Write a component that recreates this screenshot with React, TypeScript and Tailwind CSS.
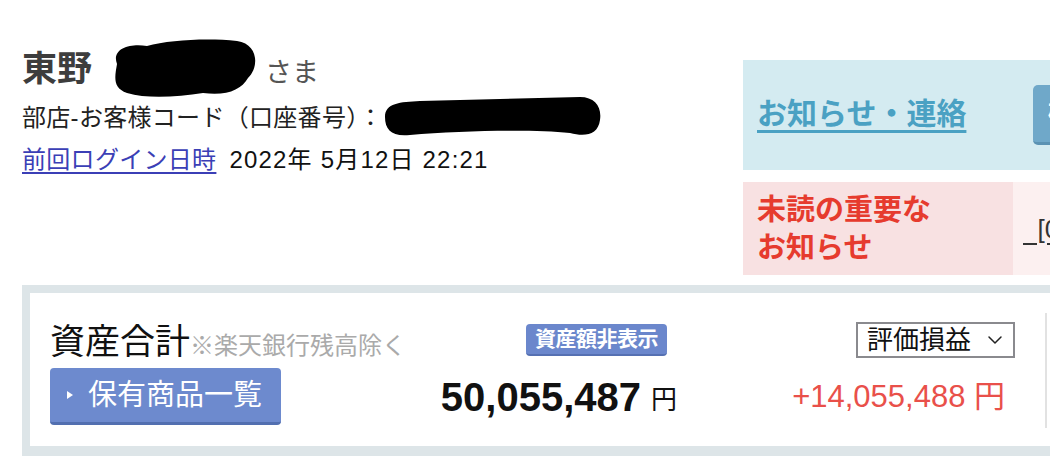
import { ChevronDown } from 'lucide-react';

function Blob({ w, h, d }: { w: number; h: number; d: string }) {
  return (
    <svg width={w} height={h} viewBox={`0 0 ${w} ${h}`} className="shrink-0">
      <path d={d} fill="#000" />
    </svg>
  );
}

export default function App() {
  return (
    <div className="w-[1050px] h-[456px] overflow-hidden bg-white font-['Liberation_Sans','Noto_Sans_CJK_JP',sans-serif] text-[#111]">
      {/* Header: user info + notices */}
      <div className="flex pt-[38px]">
        <div className="w-[743px] shrink-0 pl-[22px] flex flex-col">
          <div className="h-[60px] flex items-center">
            <span className="text-[35px] leading-none font-bold text-[#3d3d3d]">東野</span>
            <span className="ml-[15px]">
              <Blob
                w={150}
                h={60}
                d="M10,26 C4,10 24,5 40,8 C62,2 100,0 130,3 C152,6 152,30 141,40 C134,52 120,58 96,55 C70,59 40,61 20,55 C5,50 8,38 10,26 Z"
              />
            </span>
            <span className="ml-[8px] mt-[10px] text-[27px] leading-none text-[#555]">さま</span>
          </div>
          <div className="h-[40px] flex items-center">
            <span className="text-[24px] leading-none tracking-[0.3px] text-[#222]">部店-お客様コード（口座番号）：</span>
            <span className="-ml-[3px] -mt-[4px]">
              <Blob
                w={222}
                h={43}
                d="M5,22 C5,8 20,7 40,6 L200,2 C215,2 222,12 220,25 C218,40 205,42 190,38 C150,34 80,36 30,40 C12,42 5,35 5,22 Z"
              />
            </span>
          </div>
          <div className="h-[44px] flex items-center">
            <a href="#" className="text-[24px] leading-none tracking-[0.3px] text-[#3b3fb6] underline underline-offset-[4px]">
              前回ログイン日時
            </a>
            <span className="ml-[13px] text-[24px] leading-none tracking-[1.2px] text-[#111]">2022年 5月12日 22:21</span>
          </div>
        </div>

        <div className="w-[330px] shrink-0 mt-[22px] flex flex-col">
          <div className="h-[110px] bg-[#d4ebf1] flex items-center">
            <div className="w-[290px] shrink-0 pl-[14px]">
              <a
                href="#"
                className="text-[30px] leading-none font-bold text-[#4aa1c3] underline decoration-[3px] underline-offset-[6px] whitespace-nowrap"
              >
                お知らせ・連絡
              </a>
            </div>
            <div className="h-[60px] flex-1 rounded-[5px] bg-[#6fa8c9] border-b-[3px] border-[#5b92b3] flex items-center pl-[15px] text-white text-[22px] font-bold whitespace-nowrap">
              確認
            </div>
          </div>
          <div className="mt-[12px] h-[93px] flex">
            <div className="w-[270px] shrink-0 bg-[#f8e1e2] pl-[14px] flex flex-col justify-center text-[29px] leading-[38px] font-bold text-[#e63b2e]">
              <span>未読の重要な</span>
              <span>お知らせ</span>
            </div>
            <div className="flex-1 bg-[#fcf0f0] flex items-center pl-[10px]">
              <span className="text-[26px] leading-none text-[#333] underline underline-offset-[5px] whitespace-nowrap">
                &nbsp;&nbsp;[0件]
              </span>
            </div>
          </div>
        </div>
      </div>

      {/* Asset summary */}
      <div className="mt-[10px] ml-[22px] bg-[#dde5e8] pt-[8px] pl-[8px] pb-[20px]">
        <div className="bg-white h-[153px] pt-[25px] pl-[20px] flex">
          <div className="w-[392px] shrink-0 flex flex-col">
            <div className="h-[44px] flex items-end">
              <span className="text-[35px] leading-[40px] text-[#111]">資産合計</span>
              <span className="text-[24px] leading-[30px] text-[#aaa] mb-[1px]">※楽天銀行残高除く</span>
            </div>
            <button className="mt-[6px] w-[231px] h-[57px] rounded-[4px] bg-[#6d8ace] border-b-[3px] border-[#526fb0] flex items-center text-white">
              <svg width="8" height="10" viewBox="0 0 8 10" className="ml-[16px]">
                <path d="M1,1 L7,5 L1,9 Z" fill="#fff" />
              </svg>
              <span className="ml-[14px] text-[29px] leading-none">保有商品一覧</span>
            </button>
          </div>

          <div className="w-[235px] shrink-0 flex flex-col items-end">
            <div className="h-[44px] flex items-center">
              <span className="mr-[10px] h-[32px] px-[9px] rounded-[4px] bg-[#6b87cc] border-b-[2px] border-[#5570b2] text-white text-[21px] font-bold leading-[30px] tracking-[-0.5px] whitespace-nowrap">
                資産額非表示
              </span>
            </div>
            <div className="mt-[6px] h-[57px] flex items-center">
              <span className="text-[40px] font-bold leading-none">50,055,487</span>
              <span className="ml-[10px] mt-[6px] text-[26px] leading-none">円</span>
            </div>
          </div>

          <div className="w-[338px] shrink-0 flex flex-col items-end">
            <div className="h-[44px] flex items-center">
              <div className="w-[159px] h-[36px] border-2 border-[#8a8a8e] flex items-center pl-[9px]">
                <span className="text-[26px] leading-none text-[#111]">評価損益</span>
                <ChevronDown className="ml-auto mr-[6px]" size={24} strokeWidth={1.5} color="#222" />
              </div>
            </div>
            <div className="mt-[6px] h-[57px] flex items-center mr-[10px]">
              <span className="text-[31px] leading-none text-[#e9504a] whitespace-nowrap">+14,055,488 円</span>
            </div>
          </div>

          <div className="ml-[30px] mt-[-5px] w-[2px] h-[115px] shrink-0 bg-[#e2e2e2]" />
        </div>
      </div>
    </div>
  );
}
